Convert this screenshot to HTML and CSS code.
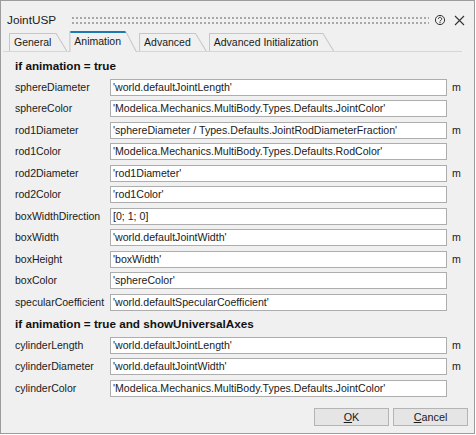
FILE: index.html
```html
<!DOCTYPE html>
<html>
<head>
<meta charset="utf-8">
<link rel="stylesheet" href="styles.css">
</head>
<body>
<div class="window">
  <div class="titlebar">
    <span class="title">JointUSP</span>
    <div class="grip"></div>
    <svg class="help" width="12" height="12" viewBox="0 0 12 12">
      <circle cx="6" cy="6" r="4.6" fill="none" stroke="#333" stroke-width="1"/>
      <path d="M4.4 4.9 A1.65 1.65 0 1 1 6.9 6.3 C6.3 6.6 6 6.9 6 7.5" fill="none" stroke="#333" stroke-width="1"/>
      <circle cx="6" cy="8.7" r="0.6" fill="#333"/>
    </svg>
    <svg class="close" width="11" height="11" viewBox="0 0 11 11">
      <path d="M1 1 L10 10 M10 1 L1 10" stroke="#333" stroke-width="1.1" fill="none"/>
    </svg>
  </div>
  <div class="tabs">
    <div class="tab"><span>General</span></div>
    <div class="tab active"><span>Animation</span></div>
    <div class="tab"><span>Advanced</span></div>
    <div class="tab"><span>Advanced Initialization</span></div>
  </div>
  <div class="form">
    <div class="heading">if animation = true</div>
    <div class="label">sphereDiameter</div><div class="field">'world.defaultJointLength'</div><div class="unit">m</div>
    <div class="label">sphereColor</div><div class="field">'Modelica.Mechanics.MultiBody.Types.Defaults.JointColor'</div><div class="unit"></div>
    <div class="label">rod1Diameter</div><div class="field">'sphereDiameter / Types.Defaults.JointRodDiameterFraction'</div><div class="unit">m</div>
    <div class="label">rod1Color</div><div class="field">'Modelica.Mechanics.MultiBody.Types.Defaults.RodColor'</div><div class="unit"></div>
    <div class="label">rod2Diameter</div><div class="field">'rod1Diameter'</div><div class="unit">m</div>
    <div class="label">rod2Color</div><div class="field">'rod1Color'</div><div class="unit"></div>
    <div class="label">boxWidthDirection</div><div class="field">[0; 1; 0]</div><div class="unit"></div>
    <div class="label">boxWidth</div><div class="field">'world.defaultJointWidth'</div><div class="unit">m</div>
    <div class="label">boxHeight</div><div class="field">'boxWidth'</div><div class="unit">m</div>
    <div class="label">boxColor</div><div class="field">'sphereColor'</div><div class="unit"></div>
    <div class="label">specularCoefficient</div><div class="field">'world.defaultSpecularCoefficient'</div><div class="unit"></div>
    <div class="heading">if animation = true and showUniversalAxes</div>
    <div class="label">cylinderLength</div><div class="field">'world.defaultJointLength'</div><div class="unit">m</div>
    <div class="label">cylinderDiameter</div><div class="field">'world.defaultJointWidth'</div><div class="unit">m</div>
    <div class="label">cylinderColor</div><div class="field">'Modelica.Mechanics.MultiBody.Types.Defaults.JointColor'</div><div class="unit"></div>
  </div>
  <div class="buttons">
    <button class="btn"><u>O</u>K</button>
    <button class="btn"><u>C</u>ancel</button>
  </div>
</div>
</body>
</html>
```

FILE: styles.css
```css
html, body {
  margin: 0;
  padding: 0;
  background: #ffffff;
}
body {
  font-family: "Liberation Sans", Arial, sans-serif;
  color: #1a1a1a;
}
.window {
  box-sizing: border-box;
  width: 475px;
  height: 434px;
  border: 1px solid #9c9c9c;
  background: #f0f0f0;
  display: flex;
  flex-direction: column;
}
.titlebar {
  box-sizing: border-box;
  height: 30px;
  padding: 8px 9px 0 6px;
  display: flex;
  align-items: center;
}
.title {
  font-size: 11.8px;
  color: #1a1a1a;
}
.grip {
  flex: 1;
  height: 7px;
  margin-left: 16px;
  background:
    linear-gradient(90deg, #a8a8a8 0 1.6px, transparent 1.6px) 0 0 / 4px 1.6px repeat-x,
    linear-gradient(90deg, #a8a8a8 0 1.6px, transparent 1.6px) 0 5px / 4px 1.6px repeat-x;
}
.help {
  margin-left: 5px;
  display: block;
}
.close {
  margin-left: 8px;
  display: block;
}
.tabs {
  display: flex;
  align-items: flex-end;
  height: 20px;
  margin: 0 12px 0 2px;
  padding-left: 6px;
  border-bottom: 1px solid #d6d6d6;
}
.tab {
  box-sizing: border-box;
  height: 18px;
  padding: 1px 0 0 1px;
  margin-right: 2px;
  background: #c6c6c6;
  clip-path: polygon(0 0, calc(100% - 11px) 0, 100% 100%, 0 100%);
}
.tab span {
  display: block;
  height: 100%;
  box-sizing: border-box;
  padding: 0 16px 0 4px;
  background: #f0f0f0;
  font-size: 10.5px;
  line-height: 17px;
  white-space: nowrap;
  color: #1a1a1a;
  clip-path: polygon(0 0, calc(100% - 11.5px) 0, calc(100% - 1.2px) 100%, 0 100%);
}
.tab.active {
  height: 21px;
  padding-top: 0;
  margin-bottom: -1px;
}
.tab.active span {
  border-top: 2px solid #1b7bb0;
  line-height: 16px;
  clip-path: polygon(0 0, calc(100% - 12px) 0, calc(100% - 1.2px) 100%, 0 100%);
}
.form {
  display: grid;
  grid-template-columns: 95px 337px auto;
  grid-auto-rows: 17px;
  row-gap: 4.5px;
  padding: 5px 0 0 14px;
}
.heading {
  grid-column: 1 / -1;
  font-weight: bold;
  font-size: 11.7px;
  line-height: 17px;
  white-space: nowrap;
  color: #111;
}
.label {
  font-size: 10.5px;
  line-height: 17px;
  white-space: nowrap;
}
.field {
  box-sizing: border-box;
  height: 17px;
  border: 1px solid #adadad;
  background: #ffffff;
  padding: 0 2px;
  font-size: 10.6px;
  line-height: 15px;
  white-space: nowrap;
  overflow: hidden;
  color: #1a1a1a;
}
.unit {
  padding-left: 5px;
  font-size: 10.6px;
  line-height: 17px;
}
.buttons {
  display: flex;
  justify-content: flex-end;
  gap: 4px;
  margin-top: 11px;
  padding-right: 6px;
}
.btn {
  box-sizing: border-box;
  width: 75px;
  height: 18px;
  margin: 0;
  padding: 0;
  border: 1px solid #b4b4b4;
  background: #e5e5e5;
  font-family: "Liberation Sans", Arial, sans-serif;
  font-size: 10.8px;
  color: #1a1a1a;
  line-height: 16px;
}
```
